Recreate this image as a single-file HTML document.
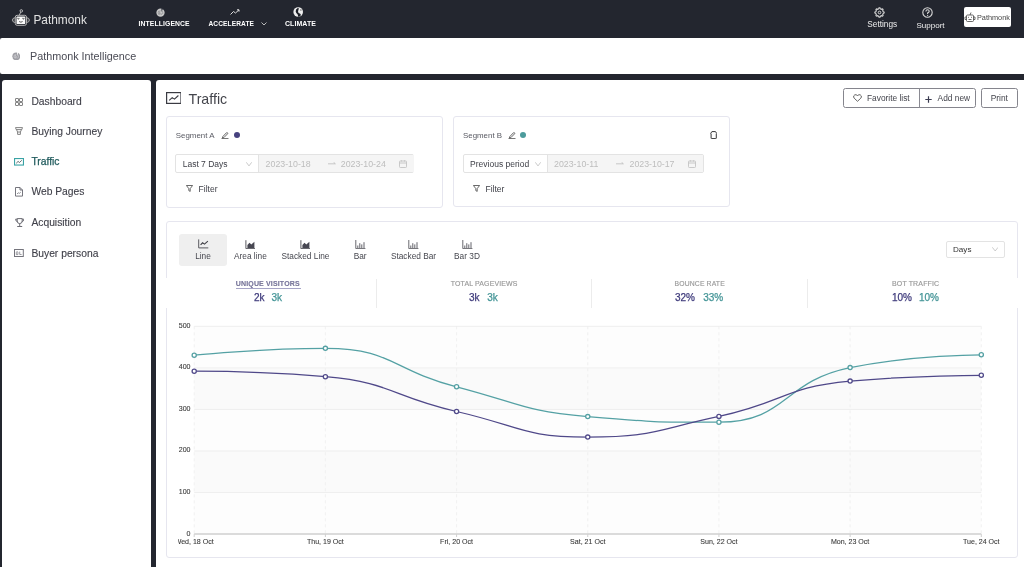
<!DOCTYPE html>
<html><head><meta charset="utf-8">
<style>
*{box-sizing:border-box;margin:0;padding:0}
html,body{width:1024px;height:567px;overflow:hidden;-webkit-font-smoothing:antialiased;background:#23262f;font-family:"Liberation Sans",sans-serif;color:#2f3036}
.a{position:absolute;white-space:nowrap}
#top{will-change:transform;position:absolute;left:0;top:0;width:1024px;height:38px;background:#23262f}
#hdr{position:absolute;left:0;top:38px;width:1024px;height:36px;background:#fff;border-radius:2px 0 0 2px}
#side{position:absolute;left:2px;top:80px;width:149px;height:500px;background:#fff;border-radius:3px 3px 0 0}
#main{position:absolute;left:156px;top:80px;width:868px;height:500px;background:#fff;border-radius:3px 0 0 0}
.nav{color:#fff;font-weight:bold;font-size:7px;letter-spacing:0.1px}
.si{font-size:10.3px;color:#40414a;-webkit-text-stroke:0.12px #40414a}
.card{position:absolute;border:1px solid #e6e6ef;border-radius:3px;background:#fff}
.btn{position:absolute;border:1px solid #85858d;border-radius:2.5px;background:#fff;font-size:8.35px;color:#4a4b55}
.sel{position:absolute;border:1px solid #e3e3e3;border-radius:2px;background:#fff}

.ct{font-size:8.3px;color:#46474f;text-align:center}
.stl{font-size:7px;color:#999;letter-spacing:0.15px;-webkit-text-stroke:0.15px #999}
.stv{font-size:10px;-webkit-text-stroke:0.25px currentColor}
.pA{color:#3f3b7c}
.pB{color:#449597}
.btxt{font-size:8.35px;color:#43444c}
.seg{font-size:7.9px;color:#595a63}
.ddt{font-size:8.5px;color:#3f4048}
.dt{font-size:8.8px}
.ddt.gray{color:#bdbdbd}
.ax{font-size:7.05px;color:#3a3a3a;-webkit-text-stroke:0.1px #3a3a3a}
</style></head><body><div id="root" style="position:absolute;left:0;top:0;width:1024px;height:567px;will-change:transform;overflow:hidden">
<div id="top">
  <!-- robot logo -->
  <svg class="a" style="left:11px;top:8px" width="21" height="19" viewBox="0 0 21 19">
    <circle cx="10.3" cy="2.9" r="1.25" fill="none" stroke="#c8c8c8" stroke-width="0.9"/>
    <path d="M9.7 4.1 L8.3 7.2" stroke="#c8c8c8" stroke-width="0.9"/>
    <path d="M4.3 9.7 Q1.5 9.9 1.4 12.1 Q1.5 14.3 4.3 14.5 M15.5 9.7 Q18.3 9.9 18.4 12.1 Q18.3 14.3 15.5 14.5" fill="none" stroke="#b4b4b4" stroke-width="1"/>
    <path d="M1.6 12.1 H4 M15.8 12.1 H18.2" stroke="#888" stroke-width="0.6"/>
    <rect x="4.3" y="7.3" width="11.2" height="10" rx="1.8" fill="none" stroke="#b4b4b4" stroke-width="1"/>
    <rect x="5.5" y="8.5" width="8.8" height="7.6" rx="0.9" fill="#fafafa"/>
    <path d="M6.4 10.2 Q6.9 9.7 7.4 10.4 Q7.9 9.7 8.4 10.2 L7.4 11.5 Z M11.4 10.2 Q11.9 9.7 12.4 10.4 Q12.9 9.7 13.4 10.2 L12.4 11.5 Z" fill="#6a6a6a" stroke="#6a6a6a" stroke-width="0.5"/>
    <path d="M8.2 13.5 Q9.9 14.9 11.6 13.5" stroke="#5a5a5a" stroke-width="1" fill="none"/>
  </svg>
  <div class="a" style="left:33.4px;top:13px;font-size:11.9px;color:#e2e2e2">Pathmonk</div>

  <svg class="a" style="left:156.3px;top:7.7px" width="9" height="9.4" viewBox="0 0 10 10"><circle cx="5" cy="5" r="4.6" fill="#c8c8c8"/><path d="M5.9 0 L6.3 4.2 L7.6 0.6 Z" fill="#23262f"/><path d="M3 7.2 Q1.8 5 3 3 M4.4 7.6 Q3.2 5 4.6 2.3 M6.2 7.4 Q5.6 6.5 5.2 5 M7.4 6.6 Q7.8 4.8 7 3.2" fill="none" stroke="#7a7a80" stroke-width="0.7"/></svg>
  <div class="a nav" style="left:138.6px;top:20.1px;font-size:6.82px">INTELLIGENCE</div>
  <svg class="a" style="left:230px;top:9px" width="10" height="6" viewBox="0 0 10 6"><path d="M0.5 5.5 L3.5 2.5 L5.5 4 L9 0.8 M7 0.8 H9 V2.6" stroke="#ddd" stroke-width="1" fill="none"/></svg>
  <div class="a nav" style="left:208.5px;top:20.1px;font-size:6.6px">ACCELERATE</div>
  <svg class="a" style="left:261px;top:21.6px" width="6" height="4" viewBox="0 0 6 4"><path d="M0.5 0.5 L3 3 L5.5 0.5" stroke="#ccc" stroke-width="0.9" fill="none"/></svg>
  <svg class="a" style="left:292.6px;top:7.3px" width="10.4" height="10" viewBox="0 0 10 10"><circle cx="5" cy="5" r="4.8" fill="#eee"/><path d="M4.6 0.9 Q2.2 2 2.5 4.6 Q2.8 6.4 4.3 7.3 Q5 8 4.8 9.7 L7.1 9.3 Q7.9 8 7.4 7 Q6.7 6.1 5.4 5.9 Q4.7 5.3 4.9 4.1 Q5.5 2.6 5.5 0.9 Z" fill="#1c1f27"/><circle cx="7.7" cy="3" r="0.7" fill="#555"/></svg>
  <div class="a nav" style="left:285px;top:20.1px;font-size:6.95px">CLIMATE</div>

  <svg class="a" style="left:873.6px;top:6.8px" width="11" height="11" viewBox="0 0 11 11"><path d="M10.15 5.50 L10.14 5.80 L9.99 6.09 L9.47 6.29 L9.06 6.46 L8.99 6.69 L8.91 6.91 L8.81 7.13 L8.70 7.34 L8.87 7.75 L9.09 8.26 L9.00 8.57 L8.79 8.79 L8.57 9.00 L8.26 9.09 L7.75 8.87 L7.35 8.70 L7.13 8.81 L6.91 8.91 L6.69 8.99 L6.46 9.06 L6.29 9.47 L6.09 9.99 L5.80 10.14 L5.50 10.15 L5.20 10.14 L4.91 9.99 L4.71 9.47 L4.54 9.06 L4.31 8.99 L4.09 8.91 L3.87 8.81 L3.66 8.70 L3.25 8.87 L2.74 9.09 L2.43 9.00 L2.21 8.79 L2.00 8.57 L1.91 8.26 L2.13 7.75 L2.30 7.34 L2.19 7.13 L2.09 6.91 L2.01 6.69 L1.94 6.46 L1.53 6.29 L1.01 6.09 L0.86 5.80 L0.85 5.50 L0.86 5.20 L1.01 4.91 L1.53 4.71 L1.94 4.54 L2.01 4.31 L2.09 4.09 L2.19 3.87 L2.30 3.66 L2.13 3.25 L1.91 2.74 L2.00 2.43 L2.21 2.21 L2.43 2.00 L2.74 1.91 L3.25 2.13 L3.65 2.30 L3.87 2.19 L4.09 2.09 L4.31 2.01 L4.54 1.94 L4.71 1.53 L4.91 1.01 L5.20 0.86 L5.50 0.85 L5.80 0.86 L6.09 1.01 L6.29 1.53 L6.46 1.94 L6.69 2.01 L6.91 2.09 L7.13 2.19 L7.35 2.30 L7.75 2.13 L8.26 1.91 L8.57 2.00 L8.79 2.21 L9.00 2.43 L9.09 2.74 L8.87 3.25 L8.70 3.65 L8.81 3.87 L8.91 4.09 L8.99 4.31 L9.06 4.54 L9.47 4.71 L9.99 4.91 L10.14 5.20 Z" fill="none" stroke="#d8d8d8" stroke-width="1.1"/><circle cx="5.5" cy="5.5" r="1.3" fill="none" stroke="#d8d8d8" stroke-width="1"/></svg>
  <div class="a" style="left:867.3px;top:20px;font-size:8.25px;color:#eee">Settings</div>
  <svg class="a" style="left:922px;top:6.7px" width="11" height="11" viewBox="0 0 11 11"><circle cx="5.5" cy="5.5" r="4.7" fill="none" stroke="#d8d8d8" stroke-width="1.1"/><path d="M3.9 4.4 Q3.9 2.7 5.5 2.7 Q7.2 2.7 7.2 4.2 Q7.2 5.2 5.6 5.9 V7" stroke="#d8d8d8" stroke-width="1.1" fill="none"/><circle cx="5.6" cy="8.3" r="0.65" fill="#d8d8d8"/></svg>
  <div class="a" style="left:916.4px;top:20.5px;font-size:8.05px;color:#eee">Support</div>
  <div class="a" style="left:964px;top:7px;width:47px;height:20px;background:#fff;border-radius:2px"></div>
  <svg class="a" style="left:964px;top:11px" width="12" height="12" viewBox="0 0 12 12">
    <rect x="2.5" y="4" width="7" height="6.5" rx="1" fill="none" stroke="#444" stroke-width="0.8"/>
    <path d="M2.5 6 H1 V8.5 H2.5 M9.5 6 H11 V8.5 H9.5 M6 4 L7 1.5" stroke="#444" stroke-width="0.8" fill="none"/>
    <path d="M4 6.3 h1 M7 6.3 h1 M4.5 8.5 h3" stroke="#444" stroke-width="0.8"/>
  </svg>
  <div class="a" style="left:977px;top:12.5px;font-size:7.3px;color:#444">Pathmonk</div>
</div>

<div id="hdr">
  <svg class="a" style="left:11.8px;top:13.8px" width="8.5" height="8.7" viewBox="0 0 10 10"><circle cx="5" cy="5" r="4.6" fill="#9e9ea4"/><path d="M5.9 0 L6.3 4.2 L7.6 0.6 Z" fill="#fff"/><path d="M3 7.2 Q1.8 5 3 3 M4.4 7.6 Q3.2 5 4.6 2.3 M6.2 7.4 Q5.6 6.5 5.2 5 M7.4 6.6 Q7.8 4.8 7 3.2" fill="none" stroke="#dcdce0" stroke-width="0.7"/></svg>
  <div class="a" style="left:30px;top:11.5px;font-size:10.8px;color:#4a4b55">Pathmonk Intelligence</div>
</div>

<div id="side"></div>
  <svg class="a" style="left:14.8px;top:97.6px" width="8" height="8" viewBox="0 0 8 8"><g fill="none" stroke="#777" stroke-width="0.9"><rect x="0.5" y="0.5" width="3" height="3" rx="0.3"/><rect x="4.5" y="0.5" width="3" height="3" rx="0.3"/><rect x="0.5" y="4.5" width="3" height="3" rx="0.3"/><rect x="4.5" y="4.5" width="3" height="3" rx="0.3"/></g></svg>
  <div class="a si" style="left:31.4px;top:96px">Dashboard</div>
  <svg class="a" style="left:14.8px;top:126.9px" width="8" height="8" viewBox="0 0 8 8"><path d="M0.5 0.6 H7.5 L6.8 2.6 H1.2 Z M1.5 2.6 L2.6 5 H5.4 L6.5 2.6 M2.6 5 V7.4 H5.4 V5" fill="none" stroke="#777" stroke-width="0.9"/></svg>
  <div class="a si" style="left:31.4px;top:126px">Buying Journey</div>
  <svg class="a" style="left:14.4px;top:158.2px" width="10" height="7.6" viewBox="0 0 10 7.6"><rect x="0.55" y="0.55" width="8.9" height="6.5" fill="#fff" stroke="#3aa3a5" stroke-width="1.1"/><path d="M2.2 5.3 L4.1 3.4 L5.5 4.5 L7.8 2.3" fill="none" stroke="#3c4a4c" stroke-width="0.8"/></svg>
  <div class="a si" style="left:31.4px;top:156.4px;color:#1f5a5c;-webkit-text-stroke:0.25px #1f5a5c">Traffic</div>
  <svg class="a" style="left:15.2px;top:187.1px" width="8" height="9.6" viewBox="0 0 8 9.6"><path d="M0.5 0.5 H5 L7.5 3 V9.1 H0.5 Z M5 0.5 V3 H7.5" fill="none" stroke="#6e6e76" stroke-width="0.95"/><path d="M2 7 L3.3 5.8 L4.3 6.4 L5.8 5.2" fill="none" stroke="#6e6e76" stroke-width="0.75"/></svg>
  <div class="a si" style="left:31.4px;top:186.4px">Web Pages</div>
  <svg class="a" style="left:14.7px;top:217.8px" width="9.4" height="9.2" viewBox="0 0 9.4 9.2"><path d="M2.2 0.6 H7.2 V3 Q7.2 5.6 4.7 5.6 Q2.2 5.6 2.2 3 Z M4.7 5.6 V8 M2.2 8.5 H7.2 M2.2 1.2 H0.6 Q0.6 3.3 2.3 3.6 M7.2 1.2 H8.8 Q8.8 3.3 7.1 3.6" fill="none" stroke="#6a6a72" stroke-width="1"/></svg>
  <div class="a si" style="left:31.4px;top:216.7px">Acquisition</div>
  <svg class="a" style="left:14.2px;top:248.6px" width="9.8" height="8" viewBox="0 0 9.8 8"><rect x="0.5" y="0.5" width="8.8" height="7" fill="none" stroke="#74747c" stroke-width="1"/><path d="M2.3 5.6 V3.6 Q2.3 2.6 3.1 2.6 Q3.9 2.6 3.9 3.6 V5.6 Z" fill="none" stroke="#74747c" stroke-width="0.7"/><path d="M5.7 2.6 V5.5 H7.6" fill="none" stroke="#74747c" stroke-width="0.7"/></svg>
  <div class="a si" style="left:31.4px;top:248px">Buyer persona</div>

<div id="main"></div>
  <!-- title -->
  <svg class="a" style="left:165.5px;top:91.9px" width="15.6" height="12" viewBox="0 0 15.6 12"><rect x="0.6" y="0.6" width="14.4" height="10.8" fill="none" stroke="#3a3b42" stroke-width="1.2"/><path d="M3.2 8.4 L6.2 5.6 L8.5 7.1 L12.4 3.5" fill="none" stroke="#3a3b42" stroke-width="1.1"/></svg>
  <div class="a" style="left:188.5px;top:90.7px;font-size:14.2px;color:#44454c">Traffic</div>

  <!-- buttons -->
  <div class="btn" style="left:843px;top:88px;width:133px;height:19.6px"></div>
  <div class="a" style="left:919px;top:88px;width:1px;height:19.6px;background:#8a8a92"></div>
  <svg class="a" style="left:853px;top:94px" width="9" height="8" viewBox="0 0 9 8"><path d="M4.5 7.3 L1.2 4.2 Q0.2 3 0.8 1.8 Q1.6 0.5 3 0.7 Q4 0.9 4.5 1.8 Q5 0.9 6 0.7 Q7.4 0.5 8.2 1.8 Q8.8 3 7.8 4.2 Z" fill="none" stroke="#555" stroke-width="0.9"/></svg>
  <div class="a btxt" style="left:867px;top:93px">Favorite list</div>
  <svg class="a" style="left:925px;top:95.5px" width="7" height="7" viewBox="0 0 7 7"><path d="M3.5 0.3 V6.7 M0.3 3.5 H6.7" stroke="#3a3b50" stroke-width="1.2"/></svg>
  <div class="a btxt" style="left:937.6px;top:93px">Add new</div>
  <div class="btn" style="left:980.5px;top:88px;width:37px;height:19.5px"></div>
  <div class="a btxt" style="left:990.7px;top:93px">Print</div>

  <!-- segment A -->
  <div class="card" style="left:165.5px;top:116px;width:277px;height:91.5px"></div>
  <div class="a seg" style="left:175.8px;top:131px">Segment A</div>
  <svg class="a" style="left:220.5px;top:131.3px" width="8" height="8" viewBox="0 0 8 8"><path d="M1.8 5.6 L5.4 1.8 Q6 1.3 6.5 1.8 Q7 2.3 6.5 2.9 L2.9 6.6 L1.4 6.9 Z" fill="none" stroke="#444" stroke-width="0.8"/><path d="M0.5 7.6 H7.5" stroke="#444" stroke-width="0.8"/></svg>
  <div class="a" style="left:233.6px;top:132.2px;width:6.3px;height:6.3px;border-radius:50%;background:#47427f"></div>
  <div class="sel" style="left:175.3px;top:154.3px;width:239.2px;height:18.5px"></div>
  <div class="a" style="left:258.2px;top:154.8px;width:156px;height:17.6px;background:#f5f5f5;border-left:1px solid #e3e3e3"></div>
  <div class="a ddt" style="left:182.7px;top:159px">Last 7 Days</div>
  <svg class="a" style="left:245.5px;top:161.5px" width="6" height="4.6" viewBox="0 0 6 4.6"><path d="M0.3 0.3 L3 3.9 L5.7 0.3" fill="none" stroke="#b8b8b8" stroke-width="0.75"/></svg>
  <div class="a ddt gray dt" style="left:265.6px;top:159px">2023-10-18</div>
  <svg class="a" style="left:327.5px;top:162px" width="8" height="3" viewBox="0 0 8 3"><path d="M0 1.8 H7.3 M5.6 0.3 L7.4 1.8" fill="none" stroke="#bbb" stroke-width="0.8"/></svg>
  <div class="a ddt gray dt" style="left:340.8px;top:159px">2023-10-24</div>
  <svg class="a" style="left:399.4px;top:159.5px" width="8" height="8" viewBox="0 0 8 8"><rect x="0.5" y="1" width="7" height="6.5" rx="0.8" fill="none" stroke="#c4c4c4" stroke-width="0.9"/><path d="M0.5 3 H7.5 M2.4 0.2 V1.6 M5.6 0.2 V1.6" stroke="#c4c4c4" stroke-width="0.9"/></svg>
  <svg class="a" style="left:185.5px;top:185.3px" width="7" height="7" viewBox="0 0 7 7"><path d="M0.4 0.5 H6.6 L4.2 3.6 V6.4 L2.8 5.6 V3.6 Z" fill="none" stroke="#444" stroke-width="0.8"/></svg>
  <div class="a ddt" style="left:198.6px;top:183.5px">Filter</div>

  <!-- segment B -->
  <div class="card" style="left:452.7px;top:116.2px;width:277.3px;height:91.3px"></div>
  <div class="a seg" style="left:463px;top:131px">Segment B</div>
  <svg class="a" style="left:507.5px;top:131.3px" width="8" height="8" viewBox="0 0 8 8"><path d="M1.8 5.6 L5.4 1.8 Q6 1.3 6.5 1.8 Q7 2.3 6.5 2.9 L2.9 6.6 L1.4 6.9 Z" fill="none" stroke="#444" stroke-width="0.8"/><path d="M0.5 7.6 H7.5" stroke="#444" stroke-width="0.8"/></svg>
  <div class="a" style="left:520px;top:132.2px;width:6.3px;height:6.3px;border-radius:50%;background:#4c9b9c"></div>
  <svg class="a" style="left:709.5px;top:131px" width="7.4" height="8.2" viewBox="0 0 7.4 8.2"><path d="M0.5 2.7 L1.9 0.6 H5.5 L6.9 2.7 M1.1 2.7 V7.1 Q1.1 7.6 1.6 7.6 H5.8 Q6.3 7.6 6.3 7.1 V2.7" fill="none" stroke="#353538" stroke-width="1"/></svg>
  <div class="sel" style="left:463px;top:154.3px;width:240.7px;height:18.5px"></div>
  <div class="a" style="left:547.1px;top:154.8px;width:156.1px;height:17.6px;background:#f5f5f5;border-left:1px solid #e3e3e3"></div>
  <div class="a ddt" style="left:470.1px;top:159px">Previous period</div>
  <svg class="a" style="left:535px;top:161.5px" width="6" height="4.6" viewBox="0 0 6 4.6"><path d="M0.3 0.3 L3 3.9 L5.7 0.3" fill="none" stroke="#b8b8b8" stroke-width="0.75"/></svg>
  <div class="a ddt gray dt" style="left:554px;top:159px">2023-10-11</div>
  <svg class="a" style="left:616.2px;top:162px" width="8" height="3" viewBox="0 0 8 3"><path d="M0 1.8 H7.3 M5.6 0.3 L7.4 1.8" fill="none" stroke="#bbb" stroke-width="0.8"/></svg>
  <div class="a ddt gray dt" style="left:629.5px;top:159px">2023-10-17</div>
  <svg class="a" style="left:688px;top:159.5px" width="8" height="8" viewBox="0 0 8 8"><rect x="0.5" y="1" width="7" height="6.5" rx="0.8" fill="none" stroke="#c4c4c4" stroke-width="0.9"/><path d="M0.5 3 H7.5 M2.4 0.2 V1.6 M5.6 0.2 V1.6" stroke="#c4c4c4" stroke-width="0.9"/></svg>
  <svg class="a" style="left:472.8px;top:185.3px" width="7" height="7" viewBox="0 0 7 7"><path d="M0.4 0.5 H6.6 L4.2 3.6 V6.4 L2.8 5.6 V3.6 Z" fill="none" stroke="#444" stroke-width="0.8"/></svg>
  <div class="a ddt" style="left:485.5px;top:183.5px">Filter</div>

  <!-- chart card -->
  <div class="card" style="left:165.5px;top:220.5px;width:852px;height:337px"></div>
  <div class="a" style="left:179px;top:233.6px;width:47.7px;height:32.3px;background:#efefef;border-radius:3px"></div>



  <svg class="a" style="left:197.6px;top:239.4px" width="11" height="10" viewBox="0 0 11 10"><path d="M0.7 0.4 V8.9 H10.3" fill="none" stroke="#5a5a60" stroke-width="1"/><path d="M2.6 5.9 L4.6 3.8 L6.5 5.1 L9.9 2.2" fill="none" stroke="#3f3f46" stroke-width="1.1"/></svg>
  <div class="a ct" style="left:183px;width:40px;top:250.8px">Line</div>
  <svg class="a" style="left:245px;top:239.6px" width="11" height="9" viewBox="0 0 11 9"><path d="M0.9 0.2 V8.6 H10" fill="none" stroke="#5a5a60" stroke-width="1"/><path d="M2.4 8 V4.9 L4.5 2.8 L6.3 4.4 L9.4 1.8 V8 Z" fill="#474752"/></svg>
  <div class="a ct" style="left:220.4px;width:60px;top:250.8px">Area line</div>
  <svg class="a" style="left:300px;top:239.6px" width="11" height="9" viewBox="0 0 11 9"><path d="M0.9 0.2 V8.6 H10" fill="none" stroke="#5a5a60" stroke-width="1"/><path d="M2.4 8 V4.9 L4.5 2.8 L6.3 4.4 L9.4 1.8 V8 Z" fill="#474752"/></svg>
  <div class="a ct" style="left:275.5px;width:60px;top:250.8px">Stacked Line</div>
  <svg class="a" style="left:354.6px;top:239.6px" width="11" height="9" viewBox="0 0 11 9"><path d="M0.8 0 V8.6 H10.4" fill="none" stroke="#6a6a70" stroke-width="1"/><path d="M2.8 8 V5.5 M4.8 8 V3.2 M6.8 8 V4.4 M9 8 V2.2" stroke="#5c5c64" stroke-width="0.95"/></svg>
  <div class="a ct" style="left:340.2px;width:40px;top:250.8px">Bar</div>
  <svg class="a" style="left:408.1px;top:239.6px" width="11" height="9" viewBox="0 0 11 9"><path d="M0.8 0 V8.6 H10.4" fill="none" stroke="#6a6a70" stroke-width="1"/><path d="M2.8 8 V5.5 M4.8 8 V3.2 M6.8 8 V4.4 M9 8 V2.2" stroke="#5c5c64" stroke-width="0.95"/></svg>
  <div class="a ct" style="left:383.5px;width:60px;top:250.8px">Stacked Bar</div>
  <svg class="a" style="left:461.9px;top:239.6px" width="11" height="9" viewBox="0 0 11 9"><path d="M0.8 0 V8.6 H10.4" fill="none" stroke="#6a6a70" stroke-width="1"/><path d="M2.8 8 V5.5 M4.8 8 V3.2 M6.8 8 V4.4 M9 8 V2.2" stroke="#5c5c64" stroke-width="0.95"/></svg>
  <div class="a ct" style="left:447px;width:40px;top:250.8px">Bar 3D</div>

  <div class="sel" style="left:946.1px;top:240.6px;width:58.7px;height:17.8px"></div>
  <div class="a" style="left:953px;font-size:8.1px;color:#333;top:245.3px">Days</div>
  <svg class="a" style="left:991.8px;top:247px" width="6.4" height="4.6" viewBox="0 0 6.4 4.6"><path d="M0.3 0.3 L3.2 4 L6.1 0.3" fill="none" stroke="#bbb" stroke-width="0.75"/></svg>

  <!-- stats row -->
  <div class="a" style="left:165px;top:278.4px;width:853px;height:29.6px;background:#fff"></div>
  <div class="a" style="left:375.7px;top:278.6px;width:1px;height:29px;background:#ececec"></div>
  <div class="a" style="left:591.4px;top:278.6px;width:1px;height:29px;background:#ececec"></div>
  <div class="a" style="left:807.4px;top:278.6px;width:1px;height:29px;background:#ececec"></div>
  <div class="a stl" style="left:235.8px;top:279.5px;color:#6d6a9c;font-weight:bold">UNIQUE VISITORS</div>
  <div class="a" style="left:235.8px;top:288px;width:64.8px;height:1px;background:#a6a4c6"></div>
  <div class="a stv pA" style="left:254px;top:292px">2k</div><div class="a stv pB" style="left:271.5px;top:292px">3k</div>
  <div class="a stl" style="left:450.8px;top:279.5px;font-size:6.95px">TOTAL PAGEVIEWS</div>
  <div class="a stv pA" style="left:469px;top:292px">3k</div><div class="a stv pB" style="left:487.3px;top:292px">3k</div>
  <div class="a stl" style="left:674.6px;top:279.5px;font-size:6.8px">BOUNCE RATE</div>
  <div class="a stv pA" style="left:675px;top:292px">32%</div><div class="a stv pB" style="left:703.2px;top:292px">33%</div>
  <div class="a stl" style="left:892px;top:279.5px">BOT TRAFFIC</div>
  <div class="a stv pA" style="left:892px;top:292px">10%</div><div class="a stv pB" style="left:918.9px;top:292px">10%</div>
<svg class="a" style="left:0;top:0" width="1024" height="567" viewBox="0 0 1024 567">
<rect x="194.20" y="492.54" width="787.10" height="41.56" fill="#fdfdfd"/>
<rect x="194.20" y="450.98" width="787.10" height="41.56" fill="#fafafa"/>
<rect x="194.20" y="409.42" width="787.10" height="41.56" fill="#fdfdfd"/>
<rect x="194.20" y="367.86" width="787.10" height="41.56" fill="#fafafa"/>
<rect x="194.20" y="326.30" width="787.10" height="41.56" fill="#fdfdfd"/>
<line x1="194.20" x2="981.30" y1="492.54" y2="492.54" stroke="#efefef" stroke-width="1"/>
<line x1="194.20" x2="981.30" y1="450.98" y2="450.98" stroke="#efefef" stroke-width="1"/>
<line x1="194.20" x2="981.30" y1="409.42" y2="409.42" stroke="#efefef" stroke-width="1"/>
<line x1="194.20" x2="981.30" y1="367.86" y2="367.86" stroke="#efefef" stroke-width="1"/>
<line x1="194.20" x2="981.30" y1="326.30" y2="326.30" stroke="#efefef" stroke-width="1"/>
<line x1="194.20" x2="194.20" y1="326.30" y2="534.10" stroke="#ededed" stroke-width="0.8" stroke-dasharray="3,3"/>
<line x1="325.38" x2="325.38" y1="326.30" y2="534.10" stroke="#ededed" stroke-width="0.8" stroke-dasharray="3,3"/>
<line x1="456.57" x2="456.57" y1="326.30" y2="534.10" stroke="#ededed" stroke-width="0.8" stroke-dasharray="3,3"/>
<line x1="587.75" x2="587.75" y1="326.30" y2="534.10" stroke="#ededed" stroke-width="0.8" stroke-dasharray="3,3"/>
<line x1="718.93" x2="718.93" y1="326.30" y2="534.10" stroke="#ededed" stroke-width="0.8" stroke-dasharray="3,3"/>
<line x1="850.12" x2="850.12" y1="326.30" y2="534.10" stroke="#ededed" stroke-width="0.8" stroke-dasharray="3,3"/>
<line x1="981.30" x2="981.30" y1="326.30" y2="534.10" stroke="#ededed" stroke-width="0.8" stroke-dasharray="3,3"/>
<line x1="194.20" x2="981.30" y1="534.1" y2="534.1" stroke="#cfcfcf" stroke-width="1.5"/>
<line x1="194.20" x2="194.20" y1="534.1" y2="537" stroke="#cfcfcf" stroke-width="1"/>
<line x1="325.38" x2="325.38" y1="534.1" y2="537" stroke="#cfcfcf" stroke-width="1"/>
<line x1="456.57" x2="456.57" y1="534.1" y2="537" stroke="#cfcfcf" stroke-width="1"/>
<line x1="587.75" x2="587.75" y1="534.1" y2="537" stroke="#cfcfcf" stroke-width="1"/>
<line x1="718.93" x2="718.93" y1="534.1" y2="537" stroke="#cfcfcf" stroke-width="1"/>
<line x1="850.12" x2="850.12" y1="534.1" y2="537" stroke="#cfcfcf" stroke-width="1"/>
<line x1="981.30" x2="981.30" y1="534.1" y2="537" stroke="#cfcfcf" stroke-width="1"/>
<path d="M194.20,355.18 C194.20,355.18 261.10,348.33 325.38,348.33 C392.28,348.33 390.45,369.60 456.57,386.81 C521.63,403.74 521.36,410.86 587.75,416.61 C652.55,422.22 655.93,422.22 718.93,422.22 C787.11,422.22 782.06,381.41 850.12,367.61 C913.24,354.81 981.30,354.81 981.30,354.81" fill="none" stroke="#54a1a4" stroke-width="1.25"/>
<path d="M194.20,371.18 C194.20,371.18 260.88,371.18 325.38,376.71 C392.06,382.43 390.47,396.29 456.57,411.50 C521.66,426.48 521.95,437.10 587.75,437.10 C653.13,437.10 654.09,430.25 718.93,416.40 C785.27,402.24 783.41,387.05 850.12,381.08 C914.59,375.30 981.30,375.30 981.30,375.30" fill="none" stroke="#4f4889" stroke-width="1.25"/>
<circle cx="194.20" cy="355.18" r="2.1" fill="#fff" stroke="#54a0a3" stroke-width="1.3"/>
<circle cx="325.38" cy="348.33" r="2.1" fill="#fff" stroke="#54a0a3" stroke-width="1.3"/>
<circle cx="456.57" cy="386.81" r="2.1" fill="#fff" stroke="#54a0a3" stroke-width="1.3"/>
<circle cx="587.75" cy="416.61" r="2.1" fill="#fff" stroke="#54a0a3" stroke-width="1.3"/>
<circle cx="718.93" cy="422.22" r="2.1" fill="#fff" stroke="#54a0a3" stroke-width="1.3"/>
<circle cx="850.12" cy="367.61" r="2.1" fill="#fff" stroke="#54a0a3" stroke-width="1.3"/>
<circle cx="981.30" cy="354.81" r="2.1" fill="#fff" stroke="#54a0a3" stroke-width="1.3"/>
<circle cx="194.20" cy="371.18" r="2.1" fill="#fff" stroke="#514a8a" stroke-width="1.3"/>
<circle cx="325.38" cy="376.71" r="2.1" fill="#fff" stroke="#514a8a" stroke-width="1.3"/>
<circle cx="456.57" cy="411.50" r="2.1" fill="#fff" stroke="#514a8a" stroke-width="1.3"/>
<circle cx="587.75" cy="437.10" r="2.1" fill="#fff" stroke="#514a8a" stroke-width="1.3"/>
<circle cx="718.93" cy="416.40" r="2.1" fill="#fff" stroke="#514a8a" stroke-width="1.3"/>
<circle cx="850.12" cy="381.08" r="2.1" fill="#fff" stroke="#514a8a" stroke-width="1.3"/>
<circle cx="981.30" cy="375.30" r="2.1" fill="#fff" stroke="#514a8a" stroke-width="1.3"/>
</svg>
<div class="a ax" style="right:833.5px;top:529.60px">0</div>
<div class="a ax" style="right:833.5px;top:488.04px">100</div>
<div class="a ax" style="right:833.5px;top:446.48px">200</div>
<div class="a ax" style="right:833.5px;top:404.92px">300</div>
<div class="a ax" style="right:833.5px;top:363.36px">400</div>
<div class="a ax" style="right:833.5px;top:321.80px">500</div>
<div class="a ax" style="left:154.20px;width:80px;text-align:center;top:537.5px">Wed, 18 Oct</div>
<div class="a ax" style="left:285.38px;width:80px;text-align:center;top:537.5px">Thu, 19 Oct</div>
<div class="a ax" style="left:416.57px;width:80px;text-align:center;top:537.5px">Fri, 20 Oct</div>
<div class="a ax" style="left:547.75px;width:80px;text-align:center;top:537.5px">Sat, 21 Oct</div>
<div class="a ax" style="left:678.93px;width:80px;text-align:center;top:537.5px">Sun, 22 Oct</div>
<div class="a ax" style="left:810.12px;width:80px;text-align:center;top:537.5px">Mon, 23 Oct</div>
<div class="a ax" style="left:941.30px;width:80px;text-align:center;top:537.5px">Tue, 24 Oct</div>
<div class="a" style="left:166.5px;top:537px;width:11.3px;height:9px;background:#fff"></div>
</div></body></html>
